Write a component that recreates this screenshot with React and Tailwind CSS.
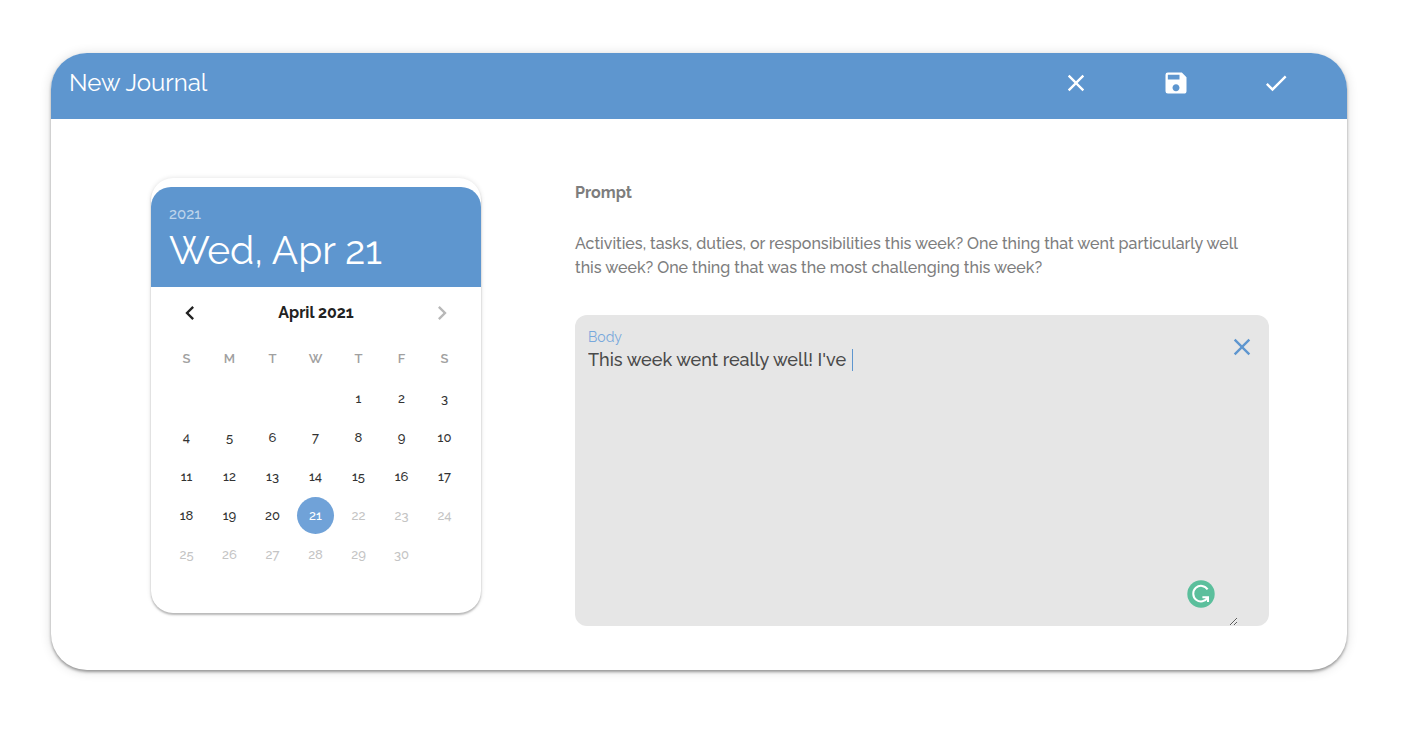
import { useState } from "react";
import { MdCheck, MdChevronLeft, MdChevronRight, MdClose, MdSave } from "react-icons/md";

const weekdays = ["S", "M", "T", "W", "T", "F", "S"];

// April 2021 starts on a Thursday
const weeks = [
    [null, null, null, null, 1, 2, 3],
    [4, 5, 6, 7, 8, 9, 10],
    [11, 12, 13, 14, 15, 16, 17],
    [18, 19, 20, 21, 22, 23, 24],
    [25, 26, 27, 28, 29, 30, null],
];

const today = 21;

function Header() {
    return (
        <header className="flex h-[66px] items-start justify-between bg-[#5e96cf] pr-[21px] pl-[18px] text-white">
            <h1 className="pt-3 text-[24px] leading-9">New Journal</h1>
            <div className="flex pt-4">
                <button className="flex w-[100px] justify-center" aria-label="Discard"><MdClose className="size-7" /></button>
                <button className="flex w-[100px] justify-center" aria-label="Save"><MdSave className="size-7" /></button>
                <button className="flex w-[100px] justify-center" aria-label="Submit"><MdCheck className="size-7" /></button>
            </div>
        </header>
    );
}

function Day({ day, selected, onSelect }) {
    let style = "text-[#333333]";
    if (day === selected) {
        style = "bg-[#70a2d8] text-white";
    }
    else if (day > today) {
        style = "text-[#c4c4c4]";
    }

    return (
        <button className={`mx-auto flex size-[37px] items-center justify-center rounded-full ${style}`} disabled={day > today} onClick={() => onSelect(day)}>
            {day}
        </button>
    );
}

function Calendar() {
    const [selected, setSelected] = useState(today);

    return (
        <section className="w-[330px] shrink-0 self-start rounded-[22px] bg-white pt-[9px] pb-[39px] shadow-[0_2px_2px_rgba(0,0,0,0.24),0_0_5px_rgba(0,0,0,0.12)]">
            <div className="h-[100px] rounded-t-[20px] bg-[#5e96cf] px-[18px] pt-[17px] text-white">
                <p className="text-[15px] leading-5 font-medium text-white/60">2021</p>
                <p className="text-[39px] leading-[52px]">Wed, Apr {selected}</p>
            </div>
            <div className="flex h-[52px] items-center justify-between px-[25px]">
                <button aria-label="Previous month" className="text-[#222222]"><MdChevronLeft className="size-7" /></button>
                <span className="text-[16px] font-bold text-[#222222]">April 2021</span>
                <button aria-label="Next month" className="text-[#b8b8b8]" disabled><MdChevronRight className="size-7" /></button>
            </div>
            <div className="pr-[15px] pl-[14px]">
                <table className="w-full table-fixed text-center text-[13px] font-medium">
                    <thead>
                        <tr className="h-[40px] align-middle text-[#a0a0a0]">
                            {weekdays.map((name, i) => <th key={i} className="font-semibold">{name}</th>)}
                        </tr>
                    </thead>
                    <tbody>
                        {weeks.map((week, i) => (
                            <tr key={i} className="h-[39px]">
                                {week.map((day, j) => (
                                    <td key={j}>{day && <Day day={day} selected={selected} onSelect={setSelected} />}</td>
                                ))}
                            </tr>
                        ))}
                    </tbody>
                </table>
            </div>
        </section>
    );
}

function BodyField() {
    const [body, setBody] = useState("This week went really well! I've ");

    return (
        <div className="relative mt-[35px] flex h-[311px] items-start rounded-[12px] bg-[#e6e6e6] pl-[13px]">
            <div className="flex h-full flex-1 flex-col pt-[13px]">
                <label htmlFor="body" className="text-[14px] leading-[18px] text-[#78a8dc]">Body</label>
                <textarea
                    id="body"
                    className="w-full flex-1 resize-y bg-transparent text-[18px] leading-7 font-medium text-[#4a4a4a] caret-[#5e96cf] outline-none"
                    value={body}
                    onChange={(event) => setBody(event.target.value)}
                />
            </div>
            <button aria-label="Clear" className="mt-[18px] mr-[13px] -ml-[10px] text-[#5e96cf]" onClick={() => setBody("")}><MdClose className="size-7" /></button>
            <span className="absolute top-[34px] left-[277px] h-[22px] w-px bg-[#5e96cf]" />
            <svg viewBox="0 0 28 28" className="absolute right-[54px] bottom-[18px] size-7" fill="none">
                <circle cx="14" cy="14" r="13.7" fill="#5bbf9c" />
                <path d="M20.6 9.4A7.8 7.8 0 1 0 20.8 17.6" stroke="white" strokeWidth="2" />
                <path d="M15.4 17.2H21V22" stroke="white" strokeWidth="2" />
                <path d="M17.5 17.2H21V21Z" fill="white" />
            </svg>
        </div>
    );
}

export default function App() {
    return (
        <main className="pt-[53px] pr-[61px] pb-[74px] pl-[51px] font-[Raleway,Lato,sans-serif] oldstyle-nums">
            <div className="overflow-hidden rounded-[36px] bg-white shadow-[0_2px_3px_rgba(0,0,0,0.36),0_1px_12px_rgba(0,0,0,0.14)]">
                <Header />
                <div className="flex gap-[94px] pt-[59px] pr-[78px] pb-[44px] pl-[100px]">
                    <Calendar />
                    <section className="min-w-0 flex-1 text-[#7d7d7d]">
                        <h2 className="pt-[3px] text-[16px] leading-6 font-bold">Prompt</h2>
                        <p className="mt-[27px] pr-4 text-[16px] leading-6 font-medium">
                            Activities, tasks, duties, or responsibilities this week? One thing that went particularly well this week? One thing that was the most challenging this week?
                        </p>
                        <BodyField />
                    </section>
                </div>
            </div>
        </main>
    );
}
